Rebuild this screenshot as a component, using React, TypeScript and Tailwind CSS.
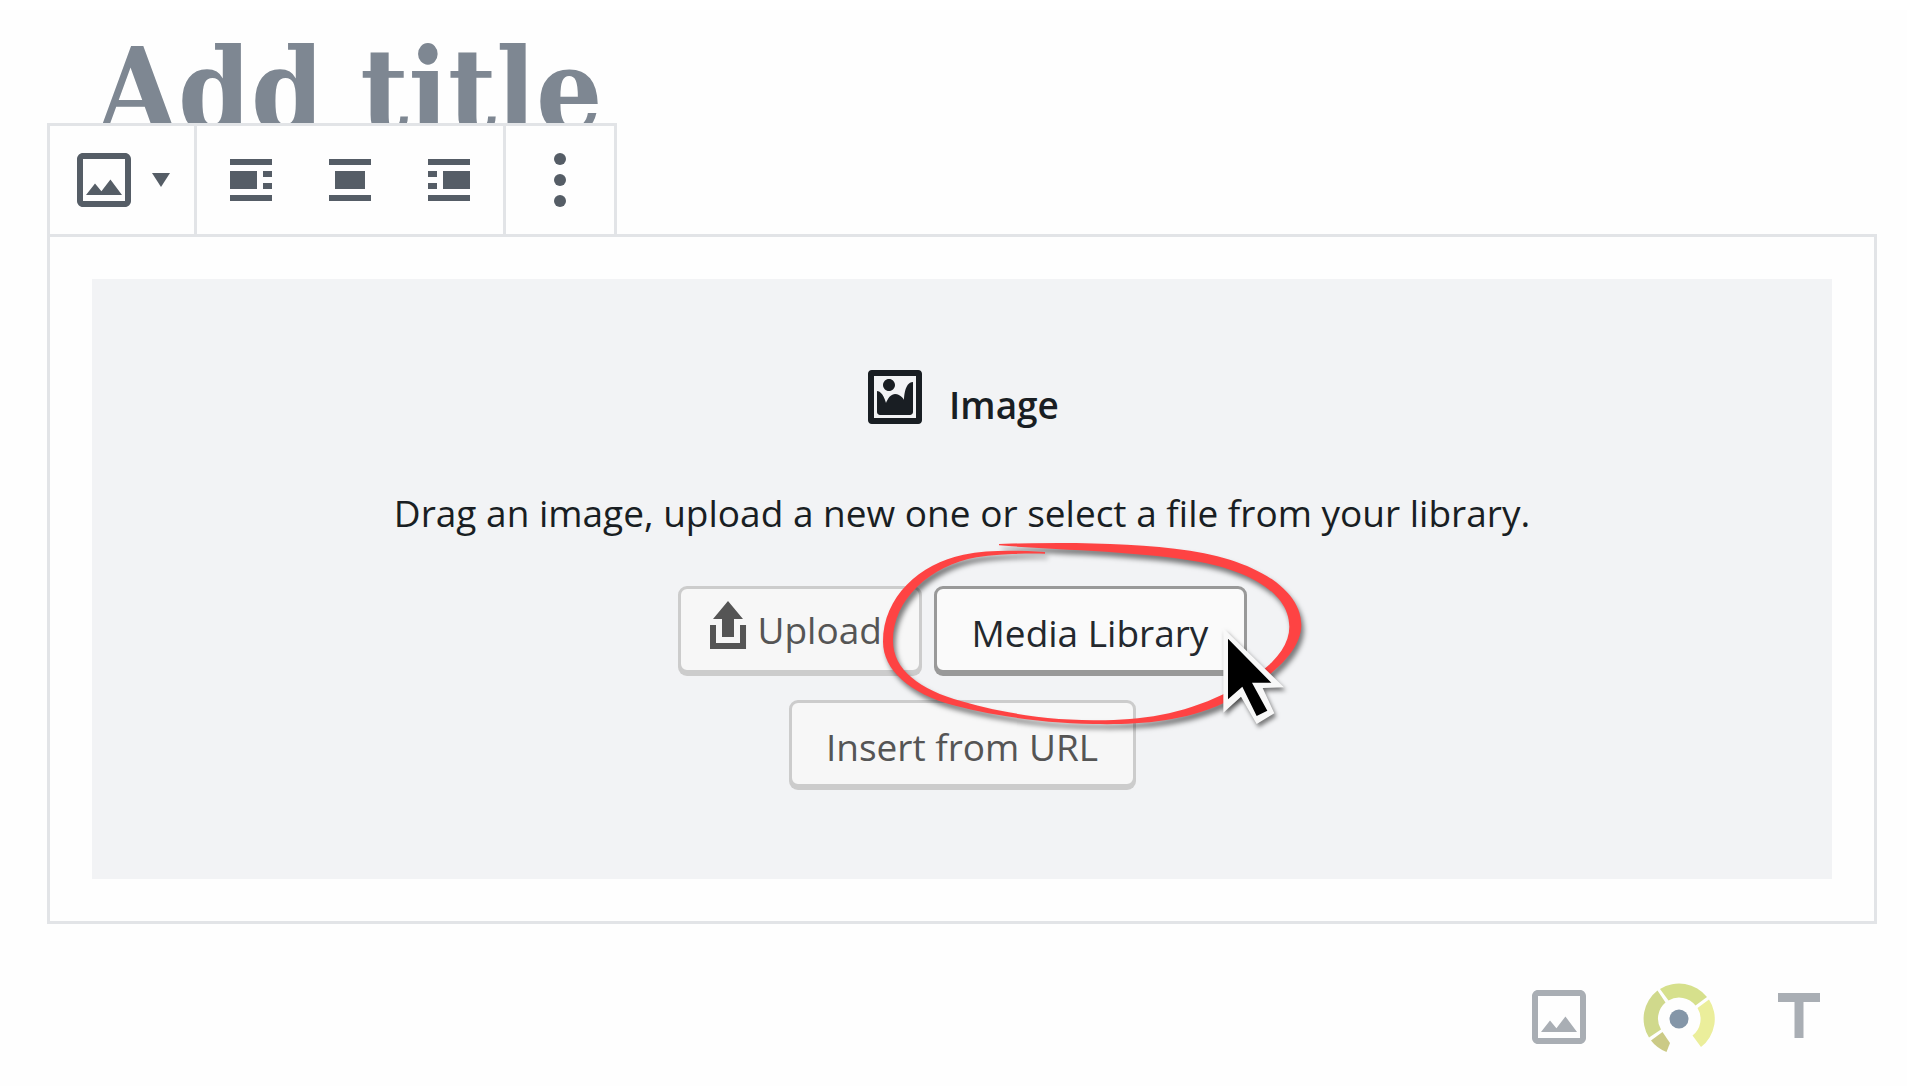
import type { ReactNode } from "react";
import { MdTitle } from "react-icons/md";

type ButtonProps = {
  label: string;
  children: ReactNode;
};

const ImageIcon = () => (
  <svg viewBox="0 0 24 24" className="size-[72px] shrink-0 fill-current">
    <path d="M19 3H5c-1.1 0-2 .9-2 2v14c0 1.1.9 2 2 2h14c1.1 0 2-.9 2-2V5c0-1.1-.9-2-2-2zm0 16H5V5h14v14z" />
    <path d="M14.14 11.86l-3 3.87L9 13.14 6 17h12z" />
  </svg>
);

const AlignLeftIcon = () => (
  <svg viewBox="0 0 14 14" className="size-[42px] fill-current">
    <path d="M0 0h14v2H0zM0 4h9v6H0zM11 4h3v2h-3zM11 8h3v2h-3zM0 12h14v2H0z" />
  </svg>
);

const AlignCenterIcon = () => (
  <svg viewBox="0 0 14 14" className="size-[42px] fill-current">
    <path d="M0 0h14v2H0zM2 4h10v6H2zM0 12h14v2H0z" />
  </svg>
);

const AlignRightIcon = () => (
  <svg viewBox="0 0 14 14" className="size-[42px] fill-current">
    <path d="M0 0h14v2H0zM5 4h9v6H5zM0 4h3v2H0zM0 8h3v2H0zM0 12h14v2H0z" />
  </svg>
);

const MoreIcon = () => (
  <svg viewBox="0 0 12 54" className="h-[54px] w-3 fill-current">
    <circle cx="6" cy="6" r="6" />
    <circle cx="6" cy="27" r="6" />
    <circle cx="6" cy="48" r="6" />
  </svg>
);

const FormatImageIcon = () => (
  <svg viewBox="0 0 20 20" className="size-[60px] fill-current">
    <path d="M2.25 1h15.5c.69 0 1.25.56 1.25 1.25v15.5c0 .69-.56 1.25-1.25 1.25H2.25C1.56 19 1 18.44 1 17.75V2.25C1 1.56 1.56 1 2.25 1zM17 17V3H3v14h14zM10 6c0-1.1-.9-2-2-2s-2 .9-2 2 .9 2 2 2 2-.9 2-2zm3 5s0-6 3-6v10c0 .55-.45 1-1 1H5c-.55 0-1-.45-1-1V8c2 0 3 4 3 4s1-3 3-3 3 2 3 2z" />
  </svg>
);

const UploadIcon = () => (
  <svg viewBox="0 0 20 20" className="mb-2.5 size-[60px] shrink-0 fill-current">
    <path d="M8 14V8H5l5-6 5 6h-3v6H8zm-2 2v-6H4v8h12.01v-8H14v6H6z" />
  </svg>
);

const GaugeIcon = () => (
  <svg viewBox="-36 -38 72 72" className="size-[72px]">
    <path fill="#d6e08c" d="M-19 -30A35.5 35.5 0 0 1 28 -22L16.5 -13.5A21 21 0 0 0 -10.5 -18.5z" />
    <path fill="#ebee9b" d="M30 -19.5A35.5 35.5 0 0 1 22 28L13.5 16.5A21 21 0 0 0 18.5 -11z" />
    <path fill="#d0d98c" d="M-30 18.5A35.5 35.5 0 0 1 -21.5 -28.5L-13.5 -16.5A21 21 0 0 0 -18 10.5z" />
    <path fill="#cbca86" d="M-28 21.5A35.5 35.5 0 0 0 -12.5 33L-9 24L-16.5 13z" />
    <circle r="9.5" fill="#8496a8" />
  </svg>
);

const Highlight = () => (
  <svg
    viewBox="0 0 1320 840"
    className="pointer-events-none absolute -left-[54px] -top-[56px] z-10 h-[280px] w-[440px] max-w-none overflow-visible"
  >
    <path
      className="drop-shadow-[8px_14px_8px_rgba(0,0,0,0.5)]"
      fill="#fe4343"
      d="M357 42C560 36 760 38 930 62C1130 92 1264 180 1264 285C1264 370 1160 455 1030 520C900 580 760 584 640 582C500 580 350 560 220 526C90 490 9 420 9 335C9 200 120 100 250 74C330 58 420 62 495 66L495 71C420 70 350 72 290 82C150 106 39 210 39 332C39 420 120 478 245 514C370 550 500 570 640 571C780 572 900 555 1030 493C1160 430 1228 360 1228 290C1228 190 1110 125 960 96C780 64 570 62 357 46z"
    />
    <path
      className="drop-shadow-[6px_10px_6px_rgba(0,0,0,0.5)]"
      fill="#f8f8f8"
      d="M1030 295L1212 472L1148 474L1183 550L1130 582L1083 500L1030 548z"
    />
    <path d="M1044 326L1174 458L1116 458L1162 542L1130 558L1087 470L1044 508z" />
  </svg>
);

const ToolbarButton = ({ label, children }: ButtonProps) => (
  <button aria-label={label} className="flex h-[108px] w-[99px] items-center justify-center">
    {children}
  </button>
);

const FooterButton = ({ label, children }: ButtonProps) => (
  <button aria-label={label} className="flex w-[120px] items-center justify-center">
    {children}
  </button>
);

const App = () => {
  return (
    <div className="min-h-screen bg-[#fefefe] pl-[47px] pr-[30px] font-['Open_Sans','Noto_Sans',sans-serif] text-[#191e23]">
      <input
        type="text"
        aria-label="Title"
        placeholder="Add title"
        className="mt-2.5 block h-40 w-full pl-[50px] font-['DejaVu_Serif_Condensed','DejaVu_Serif',serif] text-[116px] font-bold outline-none placeholder:text-[#7e8792] placeholder:opacity-100"
      />

      <div className="relative -mt-[47px] flex w-fit border-[3px] border-b-0 border-[#e2e4e7] bg-[#fefefe] text-[#555d66]">
        <button
          aria-label="Change block type"
          className="flex h-[108px] w-36 items-center gap-3 pl-[18px]"
        >
          <ImageIcon />
          <svg viewBox="0 0 18 14" className="h-[14px] w-[18px] fill-current">
            <path d="M0 0h18L9 14z" />
          </svg>
        </button>
        <div className="flex w-[312px] justify-center border-x-[3px] border-[#e2e4e7]">
          <ToolbarButton label="Align left">
            <AlignLeftIcon />
          </ToolbarButton>
          <ToolbarButton label="Align center">
            <AlignCenterIcon />
          </ToolbarButton>
          <ToolbarButton label="Align right">
            <AlignRightIcon />
          </ToolbarButton>
        </div>
        <button aria-label="More options" className="flex w-[108px] items-center justify-center">
          <MoreIcon />
        </button>
      </div>

      <main className="border-[3px] border-[#e2e4e7] p-[42px]">
        <section className="flex flex-col items-center bg-[#f2f3f5] pb-[92px] pt-[88px]">
          <div className="flex h-[60px] items-start gap-6">
            <FormatImageIcon />
            <h2 className="pt-2 text-[37px] font-semibold leading-[60px]">Image</h2>
          </div>
          <p className="mt-14 text-[37px] leading-[60px]">
            Drag an image, upload a new one or select a file from your library.
          </p>

          <div className="mt-[43px] flex gap-3">
            <button className="flex h-[87px] w-[244px] items-center rounded-[9px] border-[3px] border-[#ccc] bg-[#f7f7f7] pl-[17px] text-[37px] text-[#555] shadow-[0_3px_0_#ccc]">
              <UploadIcon />
              Upload
            </button>
            <div className="relative">
              <button className="h-[87px] w-[313px] rounded-[9px] border-[3px] border-[#999] bg-[#fafafa] pt-1.5 text-[37px] text-[#23282d] shadow-[0_3px_0_#999]">
                Media Library
              </button>
              <Highlight />
            </div>
          </div>
          <button className="mt-[27px] h-[87px] w-[347px] rounded-[9px] border-[3px] border-[#ccc] bg-[#f7f7f7] pt-1.5 text-[37px] text-[#555] shadow-[0_3px_0_#ccc]">
            Insert from URL
          </button>
        </section>
      </main>

      <footer className="flex justify-end pr-[18px] pt-[57px] text-[#a9aeb4]">
        <FooterButton label="Add image">
          <ImageIcon />
        </FooterButton>
        <FooterButton label="Add gauge">
          <GaugeIcon />
        </FooterButton>
        <FooterButton label="Add heading">
          <MdTitle size={72} />
        </FooterButton>
      </footer>
    </div>
  );
};

export default App;
